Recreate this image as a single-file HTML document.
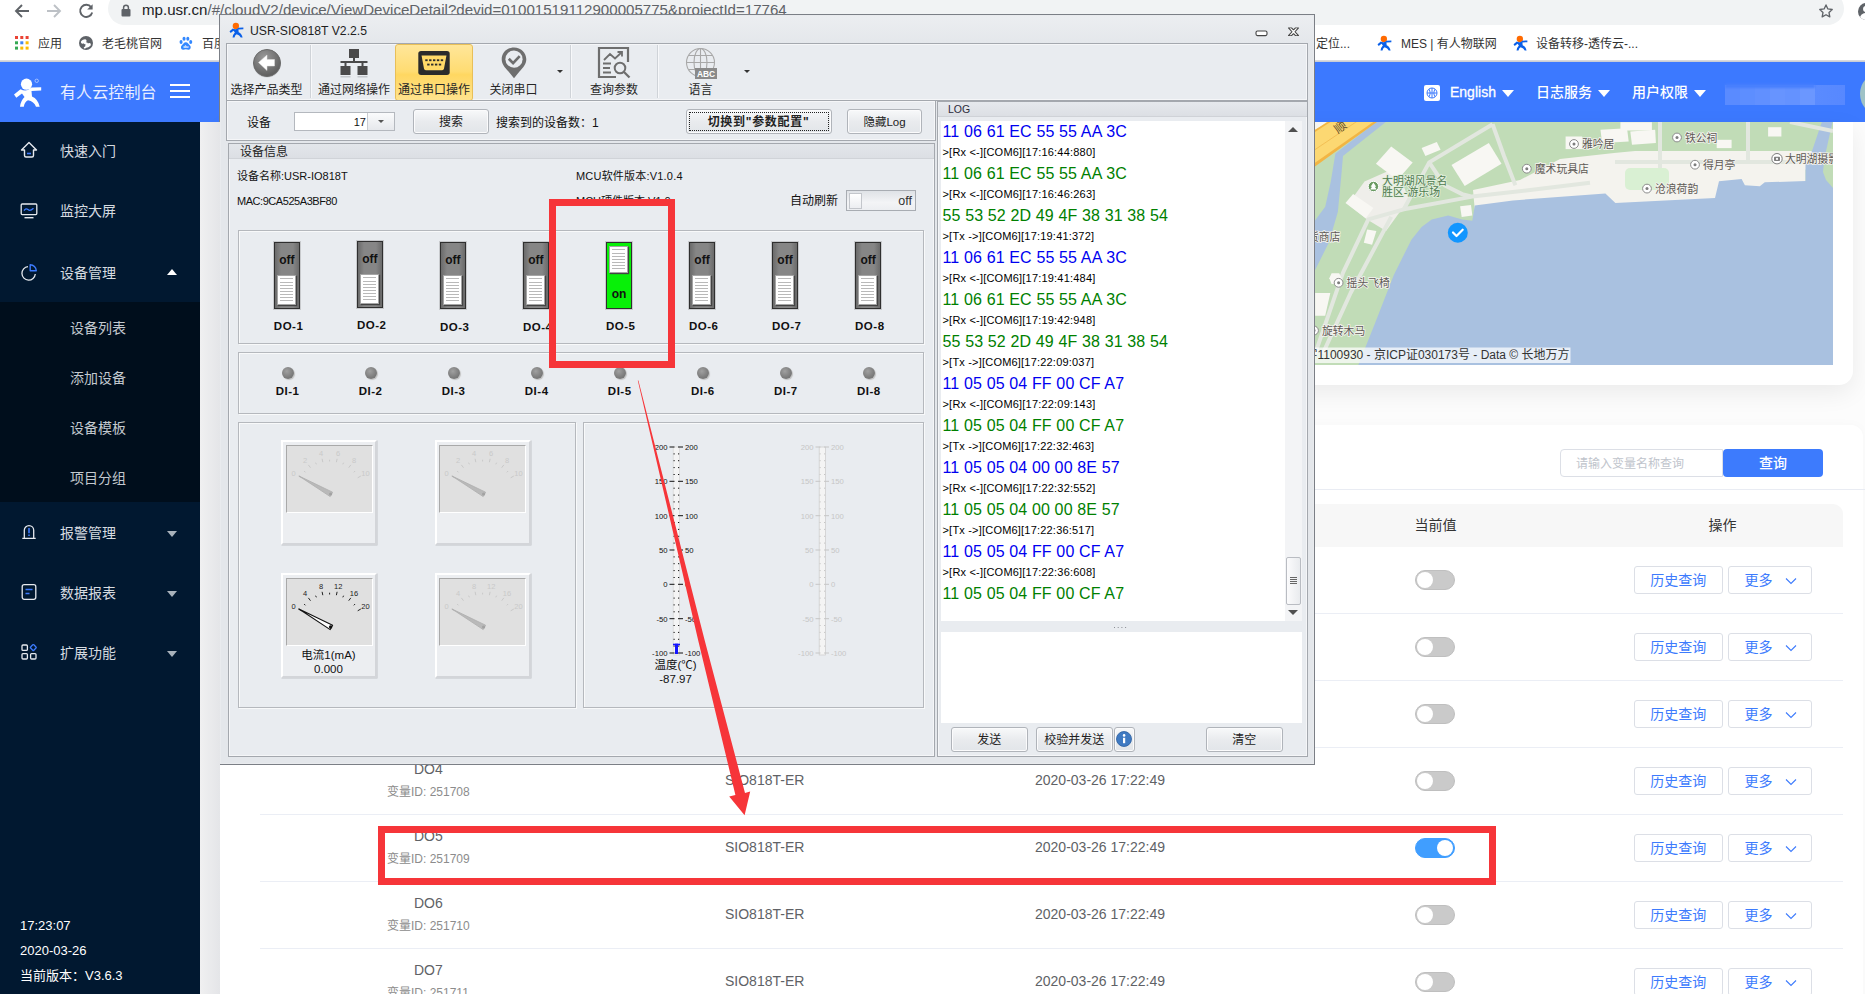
<!DOCTYPE html>
<html lang="zh-CN">
<head>
<meta charset="utf-8">
<title>有人云控制台</title>
<style>
*{box-sizing:border-box;margin:0;padding:0}
html,body{width:1865px;height:994px;overflow:hidden;background:#fff}
body{position:relative;font-family:"Liberation Sans","Noto Sans CJK SC",sans-serif;font-size:14px;color:#333}
.a{position:absolute;white-space:nowrap}
svg{position:absolute;overflow:visible}
/* ---------- browser chrome ---------- */
#chrome{left:0;top:0;width:1865px;height:61px;background:#fff}
#omni{left:108px;top:-8px;width:1736px;height:33px;border-radius:17px;background:#f1f3f4}
#url{left:142px;top:-1px;font-size:15.1px;line-height:22px;color:#202124;letter-spacing:0}
#url span{color:#5f6368}
.bm{top:35px;font-size:12px;line-height:18px;color:#333}
/* ---------- header ---------- */
#hdr{left:0;top:61px;width:1865px;height:60.500px;background:#3c79ff}
#hdr .t{color:#fff;font-size:16px;line-height:24px;top:19px}
.h2{font-size:14px!important;font-weight:500}
.tri{top:28.500px;border:6px solid transparent;border-bottom:0;border-top:7.500px solid #fff}
.dn{left:167px;border:5px solid transparent;border-bottom:0;border-top:6px solid #a9b2bb}
/* ---------- sidebar ---------- */
#side{left:0;top:122px;width:200px;height:872px;background:#011830;z-index:2}
#sub{left:0;top:180px;width:200px;height:200px;background:#000e1c}
.mi{left:60px;font-size:14px;line-height:20px;color:#d6dbe0}
.si{left:70px;font-size:14px;line-height:20px;color:#c3c9cf}
.ft{left:20px;font-size:13px;line-height:18px;color:#fff;margin-top:.5px}
/* ---------- content ---------- */
#main{left:200px;top:122px;width:1665px;height:872px;background:#fcfcfc}
#band{left:200px;top:122px;width:20px;height:872px;background:linear-gradient(90deg,#f0f0f1,#e4e5e8);z-index:1}

/* ---------- desktop app window ---------- */
#win{background:linear-gradient(#eceef1,#e4e7eb 29px,#e4e7eb);border:1px solid #7b7f86;font-family:"Liberation Sans","Noto Sans CJK SC",sans-serif;color:#222}
#win:before{content:"";position:absolute;left:0;top:0;right:0;bottom:0;border:1px solid #e9ebee}
.pnl{background:#e9ecf0;border:1px solid #a4a8ae;box-shadow:inset 1px 1px 0 #f5f6f8,inset -1px -1px 0 #f5f6f8}
.box{border:1px solid #b5b8bd;box-shadow:inset 1px 1px 0 #f8f9fa,1px 1px 0 #f8f9fa}
.tl{text-align:center;font-size:12px;line-height:17px;color:#262626}
.sm{font-size:12px;line-height:17px;color:#111}
.inf{font-size:11px;line-height:17px;color:#111}
.btn{border:1px solid #b0b4ba;border-radius:3px;background:linear-gradient(#f8f9fa,#e9ebee 50%,#e2e5e9);text-align:center;font-size:12px;color:#222;box-shadow:inset 0 0 0 1px #fbfbfc;padding-top:1px}
.sw{width:25.500px;height:67.500px;border:1px solid #2f2f2f;background:linear-gradient(90deg,#6b6b6b,#868686 25%,#868686 75%,#6b6b6b);box-shadow:0 0 0 1px #c8cacd}
.sw.on{background:#08f008;border-color:#2f2f2f}
.swt{left:0;top:10px;width:23.500px;text-align:center;font-size:12px;line-height:14px;font-weight:700;color:#111}
.swh{width:19px;height:30px;border:1px solid #a5a5a5;background:repeating-linear-gradient(#fff 0,#fff 2px,#b9b9b9 2px,#b9b9b9 3px);background-position:0 4px;box-shadow:inset 0 0 0 2px #fff,1px 1px 1px #444}
.dl{width:60px;text-align:center;font-size:11.500px;line-height:14px;font-weight:700;color:#111;letter-spacing:.5px}
.led{width:12px;height:12px;border-radius:50%;background:radial-gradient(circle at 40% 35%,#a0a0a0,#7c7c7c 60%,#6a6a6a);box-shadow:1px 1px 1px #c0c0c0}
.gg{width:96px;height:105px;background:#eceef1;border:2.500px solid #fff;border-right-color:#d3d5d9;border-bottom-color:#d3d5d9;box-shadow:.5px .5px 0 #c2c4c8}
.ggd{left:2.500px;top:2.500px;width:87px;height:68px;background:#e0e0e0;border-left:1px solid #a9a9a9;border-top:1px solid #a9a9a9;border-right:1px solid #fff;border-bottom:1px solid #fff}
.lb{font-size:16px;line-height:21px;letter-spacing:.14px}
.lb.b{color:#0000f0}.lb.g{color:#008000}
.ls{font-size:11px;line-height:21px;color:#000;letter-spacing:.2px}

/* ---------- page content ---------- */
.card{background:#fff;border-radius:0 0 14px 0;box-shadow:0 8px 24px rgba(0,0,0,.07)}
.card2{background:#fff;border-radius:0 12px 0 0;box-shadow:0 0 12px rgba(0,0,0,.025)}
.th{font-size:14px;line-height:20px;color:#333}
.td{font-size:14px;line-height:20px;color:#606266}
.tg{width:40px;height:20px;border-radius:10px;background:#cacaca;border:1px solid #bfbfbf}
.tg i{position:absolute;left:1px;top:1px;width:16px;height:16px;border-radius:50%;background:#fff}
.tg.on{background:#409eff;border-color:#409eff}.tg.on i{left:21px}
.bt{height:28px;border:1px solid #dcdfe6;border-radius:3px;background:#fff;font-size:14px;line-height:26px;color:#3d7bfd;text-align:center}
</style>
</head>
<body>

<svg width="0" height="0" style="left:-10px;top:-10px"><defs>
<g id="usrlogo" transform="translate(.5 .8) scale(.51)"><circle cx="12.500" cy="6.200" r="6.200" fill="#ff6a00"/><path d="M6.500 11.200L0 16.500l2.300 3.300L8 15.600l2.500 3.400Q6.500 23 6 28.800h3.800Q10.500 24 14 22.300q6 1.200 8 6.500h3.700Q24 21 18 18.500L17.500 13l9.700-.5V9.200L17.300 9.500Q12.500 14.500 6.500 11.200z" fill="#0b60e8"/></g>
</defs></svg>

<div id="chrome" class="a">
  <div id="omni" class="a"></div>
  <svg style="left:14px;top:3px" width="16" height="16" viewBox="0 0 16 16"><path d="M15 8H2.5M8 2L2 8l6 6" fill="none" stroke="#5f6368" stroke-width="1.9"/></svg>
  <svg style="left:46px;top:3px" width="16" height="16" viewBox="0 0 16 16"><path d="M1 8h12.5M8 2l6 6-6 6" fill="none" stroke="#bdc1c6" stroke-width="1.9"/></svg>
  <svg style="left:78px;top:3px" width="16" height="16" viewBox="0 0 16 16"><path d="M13.2 4.2A6.1 6.1 0 1 0 14.2 9.5" fill="none" stroke="#5f6368" stroke-width="1.9"/><path d="M14.6 1.2v5.4H9.2z" fill="#5f6368"/></svg>
  <svg style="left:121px;top:4px" width="10" height="13" viewBox="0 0 10 13"><rect x="0.5" y="5" width="9" height="7.5" rx="1" fill="#5f6368"/><path d="M2.6 5.5V3.6a2.4 2.4 0 0 1 4.8 0v1.9" fill="none" stroke="#5f6368" stroke-width="1.5"/></svg>
  <div id="url" class="a">mp.usr.cn<span>/#/cloudV2/device/ViewDeviceDetail?devid=01001519112900005775&amp;projectId=17764</span></div>
  <svg style="left:1818px;top:3px" width="16" height="16" viewBox="0 0 18 18"><path d="M9 2.2l2.1 4.5 4.9.6-3.6 3.4.9 4.9L9 13.2l-4.3 2.4.9-4.9L2 7.3l4.9-.6z" fill="none" stroke="#5f6368" stroke-width="1.5" stroke-linejoin="round"/></svg>
  <div class="a" style="left:1857.500px;top:2.500px;width:17px;height:17px;border-radius:50%;background:#5f6368;overflow:hidden"><div class="a" style="left:5.500px;top:3px;width:6px;height:6px;border-radius:50%;background:#fff"></div><div class="a" style="left:2.500px;top:10.500px;width:12px;height:10px;border-radius:50%;background:#fff"></div></div>
  <!-- bookmarks -->
  <svg style="left:15px;top:36px" width="14" height="14" viewBox="0 0 14 14"><g><rect x="0" y="0" width="3" height="3" fill="#ea4335"/><rect x="5.3" y="0" width="3" height="3" fill="#ea4335"/><rect x="10.6" y="0" width="3" height="3" fill="#ea4335"/><rect x="0" y="5.3" width="3" height="3" fill="#34a853"/><rect x="5.3" y="5.3" width="3" height="3" fill="#4285f4"/><rect x="10.6" y="5.3" width="3" height="3" fill="#fbbc05"/><rect x="0" y="10.6" width="3" height="3" fill="#34a853"/><rect x="5.3" y="10.6" width="3" height="3" fill="#fbbc05"/><rect x="10.6" y="10.6" width="3" height="3" fill="#fbbc05"/></g></svg>
  <div class="a bm" style="left:38px">应用</div>
  <svg style="left:79px;top:36px" width="14" height="14" viewBox="0 0 14 14"><circle cx="7" cy="7" r="7" fill="#5f6368"/><g fill="#fff"><ellipse cx="4.800" cy="5.400" rx="3" ry="1.900" transform="rotate(-25 4.800 5.400)"/><ellipse cx="9" cy="9.300" rx="3.100" ry="1.800" transform="rotate(-25 9 9.300)"/><path d="M5.500 5.500l3.500 1.500-.8 2.500-3.300-1.800z"/><ellipse cx="6.300" cy="11.400" rx="1.600" ry="1" transform="rotate(-20 6.300 11.400)"/></g></svg>
  <div class="a bm" style="left:102px">老毛桃官网</div>
  <svg style="left:178.500px;top:36px" width="13.500" height="14.500" viewBox="0 0 15 16"><g fill="#3388ff"><ellipse cx="2.3" cy="6.600" rx="1.7" ry="2.200"/><ellipse cx="5.600" cy="3" rx="1.700" ry="2.300"/><ellipse cx="9.800" cy="3" rx="1.700" ry="2.300"/><ellipse cx="13" cy="6.600" rx="1.700" ry="2.200"/><path d="M7.600 6.800c2.200 0 3.200 2.200 4.600 3.800 1.500 1.700.8 4.400-1.400 4.600-1.300.1-2-.4-3.200-.4s-1.900.5-3.200.4C2.200 15 1.500 12.300 3 10.600c1.400-1.600 2.400-3.800 4.600-3.800z"/></g><text x="7.600" y="13.400" font-size="4.800" font-weight="700" fill="#fff" text-anchor="middle" font-family="Liberation Sans,sans-serif">du</text></svg>
  <div class="a bm" style="left:202px">百度</div>
  <div class="a bm" style="left:1304px">与定位...</div>
  <svg class="usr" style="left:1377px;top:35px" width="16" height="16" viewBox="0 0 16 16"><use href="#usrlogo"/></svg>
  <div class="a bm" style="left:1401px">MES | 有人物联网</div>
  <svg class="usr" style="left:1513px;top:35px" width="16" height="16" viewBox="0 0 16 16"><use href="#usrlogo"/></svg>
  <div class="a bm" style="left:1536px">设备转移-透传云-...</div>
  <div class="a" style="left:0;top:60px;width:1865px;height:1px;background:#d9dadc"></div>
</div>


<div id="hdr" class="a"><div class="a" style="left:0;top:0;width:1865px;height:1px;background:#c9cdd6"></div>
  <svg style="left:14px;top:17px" width="28" height="30" viewBox="0 0 28 30"><g fill="#fff"><circle cx="12.500" cy="6.200" r="5.600"/><path d="M6.500 11.200L0 16.500l2.300 3.300L8 15.600l2.500 3.400Q6.500 23 6 28.800h3.800Q10.500 24 14 22.300q6 1.200 8 6.500h3.700Q24 21 18 18.500L17.500 13l9.700-.5V9.200L17.300 9.500Q12.500 14.500 6.500 11.200z"/></g><circle cx="22.700" cy="2.800" r="1.700" fill="none" stroke="#dfe8ff" stroke-width=".6"/></svg>
  <div class="a t" style="left:60px;top:19.500px;font-size:16px;letter-spacing:0.1px;color:#e9efff">有人云控制台</div>
  <div class="a" style="left:170px;top:23px;width:20px;height:2px;background:#fff;box-shadow:0 6px 0 #fff,0 12px 0 #fff"></div>
  <div class="a" style="left:1424px;top:24px;width:16px;height:16px;border-radius:2px;background:#fff"></div>
  <svg style="left:1426px;top:26px" width="12" height="12" viewBox="0 0 12 12"><g fill="none" stroke="#3d7bfd" stroke-width="1"><circle cx="6" cy="6" r="5"/><path d="M6 1v10M1 6h10M3 2.200c1.500 2.400 1.500 5.200 0 7.600M9 2.200c-1.500 2.400-1.500 5.200 0 7.600"/></g></svg>
  <div class="a t h2" style="left:1450px;-webkit-text-stroke:.3px #fff">English</div>
  <div class="a tri" style="left:1501.5px"></div>
  <div class="a t h2" style="left:1536px">日志服务</div>
  <div class="a tri" style="left:1598px"></div>
  <div class="a t h2" style="left:1632px">用户权限</div>
  <div class="a tri" style="left:1694px"></div>
  <div class="a" style="left:1725px;top:23.500px;width:120px;height:20.500px;background:linear-gradient(90deg,#5a8bff 0,#5a8bff 12.500%,#5d8eff 12.500%,#5d8eff 25%,#6190ff 25%,#6190ff 37.500%,#6794ff 37.500%,#6794ff 50%,#6492ff 50%,#6492ff 62.500%,#6b97ff 62.500%,#6b97ff 75%,#5a8bff 75%,#5788ff 100%);filter:blur(.6px)"></div><div class="a" style="left:1725px;top:23px;width:90px;height:4px;background:#477ffe;filter:blur(.8px)"></div>
  <div class="a" style="left:1860px;top:10.500px;width:44px;height:44px;border-radius:50%;background:#9fc2c6"></div>
</div>

<div id="main" class="a"></div>
<div id="band" class="a"></div>

<div id="side" class="a">
  <div id="sub" class="a"></div>
  <svg style="left:20px;top:19px" width="18" height="18" viewBox="0 0 18 18"><path d="M9 1.500L1.500 9h3v5.500a1.500 1.500 0 0 0 1.500 1.500h6a1.500 1.500 0 0 0 1.500-1.500V9h3z" fill="none" stroke="#e6e9ee" stroke-width="1.400" stroke-linejoin="round"/><path d="M7 12.500h4" stroke="#3d7bfd" stroke-width="1.600"/></svg>
  <div class="a mi" style="top:19px">快速入门</div>
  <svg style="left:20px;top:80px" width="18" height="18" viewBox="0 0 18 18"><rect x="1.200" y="2" width="15.600" height="10.600" rx="1" fill="none" stroke="#e6e9ee" stroke-width="1.300"/><path d="M4.500 15.700h9" stroke="#e6e9ee" stroke-width="1.400"/><path d="M4 8.600c1.300-2 2.600-2.200 4-1 1.500 1.300 3 1.100 5.500-1.300" fill="none" stroke="#3d7bfd" stroke-width="1.300"/></svg>
  <div class="a mi" style="top:79px">监控大屏</div>
  <svg style="left:20px;top:141px" width="18" height="18" viewBox="0 0 18 18"><path d="M8 3.700A6.700 6.700 0 1 0 15.300 11" fill="none" stroke="#e6e9ee" stroke-width="1.300"/><path d="M10.200 1.700a6.300 6.300 0 0 1 6.100 6.100h-6.100z" fill="none" stroke="#3d7bfd" stroke-width="1.400" stroke-linejoin="round"/></svg>
  <div class="a mi" style="top:141px">设备管理</div>
  <div class="a" style="left:167px;top:147px;border:5px solid transparent;border-top:0;border-bottom:6px solid #fff"></div>
  <div class="a si" style="top:196px">设备列表</div>
  <div class="a si" style="top:246px">添加设备</div>
  <div class="a si" style="top:296px">设备模板</div>
  <div class="a si" style="top:346px">项目分组</div>
  <svg style="left:20px;top:401px" width="18" height="18" viewBox="0 0 18 18"><path d="M4.300 15V7.300a4.700 4.700 0 0 1 9.400 0V15M2.300 15.300h13.400" fill="none" stroke="#e6e9ee" stroke-width="1.300"/><path d="M9 5v5.200M9 11.600v1.500" stroke="#3d7bfd" stroke-width="1.600"/></svg>
  <div class="a mi" style="top:401px">报警管理</div>
  <div class="a dn" style="top:409px"></div>
  <svg style="left:20px;top:461px" width="18" height="18" viewBox="0 0 18 18"><rect x="2.200" y="1.700" width="13.600" height="14.600" rx="2" fill="none" stroke="#e6e9ee" stroke-width="1.300"/><path d="M5.500 6.500h7M5.500 10.500h4" stroke="#3d7bfd" stroke-width="1.400"/></svg>
  <div class="a mi" style="top:461px">数据报表</div>
  <div class="a dn" style="top:469px"></div>
  <svg style="left:20px;top:521px" width="18" height="18" viewBox="0 0 18 18"><g fill="none" stroke="#e6e9ee" stroke-width="1.300"><rect x="2" y="2" width="5.400" height="5.400" rx="1"/><rect x="2" y="10.600" width="5.400" height="5.400" rx="1"/><rect x="10.600" y="10.600" width="5.400" height="5.400" rx="1"/></g><rect x="11" y="2.200" width="4.600" height="4.600" rx=".8" transform="rotate(45 13.300 4.500)" fill="none" stroke="#3d7bfd" stroke-width="1.300"/></svg>
  <div class="a mi" style="top:521px">扩展功能</div>
  <div class="a dn" style="top:529px"></div>
  <div class="a ft" style="top:794px">17:23:07</div>
  <div class="a ft" style="top:819px">2020-03-26</div>
  <div class="a ft" style="top:844px">当前版本：V3.6.3</div>
</div>

<!--PAGE-->
<div class="a card" style="left:220px;top:122px;width:1633px;height:263px"></div>
<svg id="map" style="left:1315px;top:122px" width="518" height="243" viewBox="0 0 518 243"><defs><clipPath id="mc"><rect width="518" height="243"/></clipPath></defs><g clip-path="url(#mc)"><rect width="518" height="243" fill="#c1dcb7"/><polygon fill="#f4f3ee" points="158,68 205,58 245,37 299,31 320,29 500,29 494,42 490.5,48 490.5,66 453,68 430,68 404,66 400,82 300,87 290,80 198,86 160,90"/><polygon fill="#a9c1e0" points="43.2,243.3 60.9,198.9 78.7,153.2 96.4,117.7 106.6,105.1 116.7,97.4 133.2,93.6 147.2,97.4 157.3,98.7 159.8,83.5 197.9,78.4 290.4,71.6 300.4,80.9 400.0,75.9 404.0,59.3 426.6,57.0 429.9,63.3 444.8,64.3 449.8,60.3 490.5,59 490.5,41 497,29 506.8,0 518,0 518,243"/><polygon fill="#a9c1e0" points="-5.0,105.1 -5.0,158.3 5.1,138.0 14.0,120.3 22.9,89.8 26.7,49.3 28.0,34.0 71.1,-0.2 61.4,-0.2 20.4,31.5 15.8,59.4 10.2,84.8"/><polygon fill="#c1dcb7" points="518,0 517.5,0 509.5,36 508,50 511,58 518,66"/><rect x="310" y="46" width="44" height="22" rx="5" fill="#d9f0d3"/><polygon fill="#efeeea" points="49.5,59.4 81.2,45.5 93.9,77.2 71.1,108.9 52.1,97.4 33.0,82.2"/><path d="M88.8,87.3 L157.3,74.6 L213.1,68.3 L275.0,60.7 M88.8,87.3 L114.2,40.4 L177.6,2.3 M177.6,2.3 L189.0,34.0 L200.4,63.2 M114.2,40.4 L129.4,63.2 L147.2,72.1 L157.3,74.6 M88.8,87.3 L53.3,97.4 L28.0,150.7 L0.1,231.9 M76.2,94.9 L35.6,171.0 L7.7,231.9 M345 0V46M433 0V42M300 40L518 40M475 0L518 9" fill="none" stroke="#e2e7df" stroke-width="4" stroke-linejoin="round"/><polygon fill="#f2b544" points="-5.0,-1.5 64.0,-1.5 -5.0,48.0"/><polygon fill="#fcd872" points="-5.0,-1.5 60.4,-1.5 -5.0,44.2"/><polygon fill="#f7f6f2" points="-5.0,-1.5 14.0,-1.5 -5.0,11.7"/><polygon fill="#f2b544" points="-5.0,10.7 15.3,-1.5 17.8,-1.5 -5.0,13.2"/><path d="M-5.0,31.0 L43.2,-1.5" stroke="#f0b94c" stroke-width=".8"/><text x="23" y="12" font-size="12" fill="#5a4a2a" transform="rotate(-37 23 12)" font-family="Liberation Sans,Noto Sans CJK SC,sans-serif">顺</text><polygon fill="#f8f7f3" points="60.9,41.7 76.2,24.4 97.7,40.4 82.5,58.1"/><polygon fill="#f8f7f3" points="106.6,25.9 121.8,20.1 125.6,27.7 110.4,34.0"/><polygon fill="#f8f7f3" points="136.5,42.9 173.8,20.9 186.5,41.7 149.7,64.0"/><polygon fill="#f8f7f3" points="30.5,81.0 38.1,72.1 58.4,86.0 50.8,96.2"/><polygon fill="#f8f7f3" points="52.1,107.6 61.4,108.9 57.1,122.8 48.8,120.8"/><polygon fill="#f8f7f3" points="145.1,84.3 156.0,83.0 157.3,93.6 146.7,94.9"/><polygon fill="#f8f7f3" points="0.1,171.0 15.3,171.0 10.2,193.8 0.1,193.8"/><polygon fill="#f8f7f3" points="16.6,151.2 24.2,151.2 26.7,156.3 24.2,162.1 16.6,162.1 14.3,156.3"/><polygon fill="#f8f7f3" points="285.5,7.8 312.0,6.2 313.7,19.5 287.1,21.1"/><polygon fill="#f8f7f3" points="315.3,9.5 340.2,7.8 340.9,21.1 317.0,22.8"/><polygon fill="#f8f7f3" points="305.4,0.2 336.9,0.2 336.9,8.5 305.4,8.5"/><polygon fill="#f8f7f3" points="453.1,5.2 466.4,5.2 466.4,14.5 453.1,14.5"/><polygon fill="#f8f7f3" points="401.7,17.8 416.6,17.8 416.6,26.1 401.7,26.1"/><polygon fill="#f8f7f3" points="250.6,14.5 267.2,14.5 267.2,27.1 250.6,27.1"/><style>.pt{font-size:10.8px;fill:#5e5a55;font-family:"Liberation Sans","Noto Sans CJK SC",sans-serif;paint-order:stroke;stroke:#f4f3ef;stroke-width:1.6px}.gt{font-size:10.9px;fill:#4e7a4e;font-family:"Liberation Sans","Noto Sans CJK SC",sans-serif;paint-order:stroke;stroke:#e4f0de;stroke-width:1.6px}</style><circle cx="259" cy="22" r="4.4" fill="#fff" stroke="#8b8b8b" stroke-width="1"/><circle cx="259" cy="22" r="1.5" fill="#7d7d7d"/><text x="267" y="26" class="pt">雅吟居</text><circle cx="362" cy="15.5" r="4.4" fill="#fff" stroke="#8b8b8b" stroke-width="1"/><circle cx="362" cy="15.5" r="1.5" fill="#7d7d7d"/><text x="370" y="19.5" class="pt">铁公祠</text><circle cx="211.8" cy="46.7" r="4.4" fill="#fff" stroke="#8b8b8b" stroke-width="1"/><circle cx="211.8" cy="46.7" r="1.5" fill="#7d7d7d"/><text x="219.8" y="50.7" class="pt">魔术玩具店</text><circle cx="380" cy="42.7" r="4.4" fill="#fff" stroke="#8b8b8b" stroke-width="1"/><circle cx="380" cy="42.7" r="1.5" fill="#7d7d7d"/><text x="388" y="46.7" class="pt">得月亭</text><circle cx="332" cy="66.6" r="4.4" fill="#fff" stroke="#8b8b8b" stroke-width="1"/><circle cx="332" cy="66.6" r="1.5" fill="#7d7d7d"/><text x="340" y="70.6" class="pt">沧浪荷韵</text><circle cx="462" cy="36.7" r="5.2" fill="#fff" stroke="#7d7d7d" stroke-width="1"/><rect x="459" y="34.7" width="6" height="4.4" rx=".8" fill="#7d7d7d"/><circle cx="462" cy="36.900000000000006" r="1.1" fill="#fff"/><text x="470" y="40.7" class="pt">大明湖摄影</text><circle cx="23.6" cy="160.8" r="4.4" fill="#fff" stroke="#8b8b8b" stroke-width="1"/><circle cx="23.6" cy="160.8" r="1.5" fill="#7d7d7d"/><text x="31.6" y="164.8" class="pt">摇头飞椅</text><circle cx="-1" cy="208.5" r="4.4" fill="#fff" stroke="#8b8b8b" stroke-width="1"/><circle cx="-1" cy="208.5" r="1.5" fill="#7d7d7d"/><text x="7" y="212.5" class="pt">旋转木马</text><text x="-7" y="118.5" class="pt">货商店</text><circle cx="58.4" cy="64.5" r="5.2" fill="#6a9a62" stroke="#fff" stroke-width="1"/><path d="M58.4 60.6l2.8 4.200h-1.500l2 2.800h-6.600l2-2.800h-1.500z" fill="#fff"/><text x="67" y="62.5" class="gt">大明湖风景名</text><text x="67" y="73.500" class="gt">胜区-游乐场</text><circle cx="142.8" cy="110.800" r="10" fill="#1296ff"/><path d="M138 110.500l3.500 3.500 6.200-6.300" fill="none" stroke="#fff" stroke-width="2.200" stroke-linecap="round" stroke-linejoin="round"/><rect x="-10" y="225.500" width="265.500" height="15.500" fill="#fff" fill-opacity=".72"/><text x="254.5" y="237" text-anchor="end" font-size="12" fill="#333" font-family="Liberation Sans,Noto Sans CJK SC,sans-serif">GS(2019)5218号 - 甲测资字1100930 - 京ICP证030173号 - Data © 长地万方</text></g></svg>
<div class="a card2" style="left:220px;top:425px;width:1643px;height:600px"></div>
<div class="a" style="left:1560px;top:449px;width:163px;height:28px;border:1px solid #dcdfe6;border-radius:4px 0 0 4px;background:#fff"></div>
<div class="a" style="left:1576px;top:455px;font-size:12px;line-height:18px;color:#c0c4cc">请输入变量名称查询</div>
<div class="a" style="left:1723px;top:449px;width:100px;height:28px;border-radius:4px;background:#3d7bfd;color:#fff;font-size:14px;font-weight:500;line-height:28px;text-align:center">查询</div>
<div class="a" style="left:220px;top:488.500px;width:1645px;height:1px;background:#e9ecf3"></div>
<div class="a" style="left:240px;top:504px;width:1603px;height:43px;background:#f7f7f7;border-radius:10px 10px 0 0"></div>
<div class="a th" style="left:1414.500px;top:515px">当前值</div>
<div class="a th" style="left:1708.500px;top:515px">操作</div>
<div class="a" style="left:260px;top:613px;width:1583px;height:1px;background:#ebeef5"></div>
<div class="a tg" style="left:1415px;top:570px"><i></i></div>
<div class="a bt" style="left:1633.5px;top:566px;width:89.5px">历史查询</div>
<div class="a bt" style="left:1727.5px;top:566px;width:84.5px;text-align:left;padding-left:16px">更多<svg style="left:56px;top:10px" width="12" height="8" viewBox="0 0 12 8"><path d="M1 1.500l5 5 5-5" fill="none" stroke="#3d7bfd" stroke-width="1.100"/></svg></div>
<div class="a" style="left:260px;top:680px;width:1583px;height:1px;background:#ebeef5"></div>
<div class="a tg" style="left:1415px;top:637px"><i></i></div>
<div class="a bt" style="left:1633.5px;top:633px;width:89.5px">历史查询</div>
<div class="a bt" style="left:1727.5px;top:633px;width:84.5px;text-align:left;padding-left:16px">更多<svg style="left:56px;top:10px" width="12" height="8" viewBox="0 0 12 8"><path d="M1 1.500l5 5 5-5" fill="none" stroke="#3d7bfd" stroke-width="1.100"/></svg></div>
<div class="a" style="left:260px;top:747px;width:1583px;height:1px;background:#ebeef5"></div>
<div class="a tg" style="left:1415px;top:704px"><i></i></div>
<div class="a bt" style="left:1633.5px;top:700px;width:89.5px">历史查询</div>
<div class="a bt" style="left:1727.5px;top:700px;width:84.5px;text-align:left;padding-left:16px">更多<svg style="left:56px;top:10px" width="12" height="8" viewBox="0 0 12 8"><path d="M1 1.500l5 5 5-5" fill="none" stroke="#3d7bfd" stroke-width="1.100"/></svg></div>
<div class="a" style="left:260px;top:814px;width:1583px;height:1px;background:#ebeef5"></div>
<div class="a tg" style="left:1415px;top:771px"><i></i></div>
<div class="a bt" style="left:1633.5px;top:767px;width:89.5px">历史查询</div>
<div class="a bt" style="left:1727.5px;top:767px;width:84.5px;text-align:left;padding-left:16px">更多<svg style="left:56px;top:10px" width="12" height="8" viewBox="0 0 12 8"><path d="M1 1.500l5 5 5-5" fill="none" stroke="#3d7bfd" stroke-width="1.100"/></svg></div>
<div class="a" style="left:414px;top:759px;font-size:14px;line-height:20px;color:#606266">DO4</div>
<div class="a" style="left:387px;top:782.5px;font-size:12px;line-height:18px;color:#8c8c8c">变量ID: 251708</div>
<div class="a td" style="left:725px;top:769.5px">SIO818T-ER</div>
<div class="a td" style="left:1035px;top:769.5px">2020-03-26 17:22:49</div>
<div class="a" style="left:260px;top:881px;width:1583px;height:1px;background:#ebeef5"></div>
<div class="a tg on" style="left:1415px;top:838px"><i></i></div>
<div class="a bt" style="left:1633.5px;top:834px;width:89.5px">历史查询</div>
<div class="a bt" style="left:1727.5px;top:834px;width:84.5px;text-align:left;padding-left:16px">更多<svg style="left:56px;top:10px" width="12" height="8" viewBox="0 0 12 8"><path d="M1 1.500l5 5 5-5" fill="none" stroke="#3d7bfd" stroke-width="1.100"/></svg></div>
<div class="a" style="left:414px;top:826px;font-size:14px;line-height:20px;color:#606266">DO5</div>
<div class="a" style="left:387px;top:849.5px;font-size:12px;line-height:18px;color:#8c8c8c">变量ID: 251709</div>
<div class="a td" style="left:725px;top:836.5px">SIO818T-ER</div>
<div class="a td" style="left:1035px;top:836.5px">2020-03-26 17:22:49</div>
<div class="a" style="left:260px;top:948px;width:1583px;height:1px;background:#ebeef5"></div>
<div class="a tg" style="left:1415px;top:905px"><i></i></div>
<div class="a bt" style="left:1633.5px;top:901px;width:89.5px">历史查询</div>
<div class="a bt" style="left:1727.5px;top:901px;width:84.5px;text-align:left;padding-left:16px">更多<svg style="left:56px;top:10px" width="12" height="8" viewBox="0 0 12 8"><path d="M1 1.500l5 5 5-5" fill="none" stroke="#3d7bfd" stroke-width="1.100"/></svg></div>
<div class="a" style="left:414px;top:893px;font-size:14px;line-height:20px;color:#606266">DO6</div>
<div class="a" style="left:387px;top:916.5px;font-size:12px;line-height:18px;color:#8c8c8c">变量ID: 251710</div>
<div class="a td" style="left:725px;top:903.5px">SIO818T-ER</div>
<div class="a td" style="left:1035px;top:903.5px">2020-03-26 17:22:49</div>
<div class="a tg" style="left:1415px;top:972px"><i></i></div>
<div class="a bt" style="left:1633.5px;top:968px;width:89.5px">历史查询</div>
<div class="a bt" style="left:1727.5px;top:968px;width:84.5px;text-align:left;padding-left:16px">更多<svg style="left:56px;top:10px" width="12" height="8" viewBox="0 0 12 8"><path d="M1 1.500l5 5 5-5" fill="none" stroke="#3d7bfd" stroke-width="1.100"/></svg></div>
<div class="a" style="left:414px;top:960px;font-size:14px;line-height:20px;color:#606266">DO7</div>
<div class="a" style="left:387px;top:983.5px;font-size:12px;line-height:18px;color:#8c8c8c">变量ID: 251711</div>
<div class="a td" style="left:725px;top:970.5px">SIO818T-ER</div>
<div class="a td" style="left:1035px;top:970.5px">2020-03-26 17:22:49</div>
<!--/PAGE-->
<!--WIN-->
<div id="win" class="a" style="left:219px;top:14px;width:1096px;height:751px">
<svg style="left:9px;top:7px" width="16" height="16" viewBox="0 0 16 16"><use href="#usrlogo"/></svg>
<div class="a" style="left:30px;top:7px;font-size:12.2px;line-height:18px;color:#1e1e1e">USR-SIO818T V2.2.5</div>
<svg style="left:1035px;top:15px" width="13" height="7" viewBox="0 0 13 7"><rect x="1" y="1" width="11" height="4.600" rx="1.500" fill="#fff" stroke="#444" stroke-width="1.100"/></svg>
<svg style="left:1067px;top:11.5px" width="13" height="9.5" viewBox="0 0 13 11" preserveAspectRatio="none"><path d="M1.500 1h3l2 2.300 2-2.300h3L8 5.500l3.500 4.500h-3l-2-2.300-2 2.300h-3L5 5.500z" fill="#fff" stroke="#444" stroke-width="1.100" stroke-linejoin="round"/></svg>
<div class="a pnl" style="left:6px;top:28px;width:1082px;height:58px"></div>
<div class="a" style="left:175px;top:29px;width:78px;height:56.5px;border:1px solid #e8bf58;border-radius:3px;background:linear-gradient(#ffe69a,#ffdc72 48%,#ffd761 54%,#ffe38e)"></div>
<div class="a" style="left:90px;top:30px;width:1px;height:53px;background:#cfd3d8;box-shadow:1px 0 0 #f7f8fa"></div>
<div class="a" style="left:350px;top:30px;width:1px;height:53px;background:#cfd3d8;box-shadow:1px 0 0 #f7f8fa"></div>
<div class="a" style="left:437px;top:30px;width:1px;height:53px;background:#cfd3d8;box-shadow:1px 0 0 #f7f8fa"></div>
<div class="a tl" style="left:-3.5px;top:67px;width:100px">选择产品类型</div>
<div class="a tl" style="left:84px;top:67px;width:100px">通过网络操作</div>
<div class="a tl" style="left:164px;top:67px;width:100px">通过串口操作</div>
<div class="a tl" style="left:243.5px;top:67px;width:100px">关闭串口</div>
<div class="a tl" style="left:344px;top:67px;width:100px">查询参数</div>
<div class="a tl" style="left:430.6px;top:67px;width:100px">语言</div>
<svg style="left:32px;top:33px" width="30" height="30" viewBox="0 0 30 30"><defs><radialGradient id="gb" cx=".4" cy=".3" r=".8"><stop offset="0" stop-color="#9a9a9a"/><stop offset="1" stop-color="#555"/></radialGradient></defs><circle cx="15" cy="15.500" r="14" fill="#c9ccd0"/><circle cx="15" cy="15" r="13.500" fill="url(#gb)" stroke="#6b6b6b" stroke-width="1"/><path d="M6.500 14.500l8.500-7.500v4.500h7.500v6.500H15v4.500z" fill="#fff" stroke="#e0e0e0" stroke-width=".5"/></svg>
<svg style="left:119px;top:33px" width="30" height="30" viewBox="0 0 30 30"><g fill="#4a4a4a"><rect x="10" y="1" width="10" height="9"/><rect x="1.500" y="18" width="10" height="9"/><rect x="18.500" y="18" width="10" height="9"/><rect x="14" y="10" width="2" height="4"/><rect x="1.500" y="13" width="27" height="2"/><rect x="5.500" y="14" width="2" height="4"/><rect x="22.500" y="14" width="2" height="4"/></g><rect x="1.500" y="28" width="10" height="1.500" fill="#c4c7cb"/><rect x="18.500" y="28" width="10" height="1.500" fill="#c4c7cb"/></svg>
<svg style="left:198px;top:36px" width="32" height="24" viewBox="0 0 34 26"><rect x="0" y="0" width="34" height="26" rx="3" fill="#2b2b2b"/><path d="M3.500 5h27l-2.700 14.200a2 2 0 0 1-2 1.600H8.200a2 2 0 0 1-2-1.600z" fill="#ffd968"/><g fill="#2b2b2b"><rect x="7.500" y="9" width="2.600" height="2"/><rect x="11.700" y="9" width="2.600" height="2"/><rect x="15.900" y="9" width="2.600" height="2"/><rect x="20.100" y="9" width="2.600" height="2"/><rect x="24.300" y="9" width="2.600" height="2"/><rect x="9.600" y="13.700" width="2.600" height="2"/><rect x="13.800" y="13.700" width="2.600" height="2"/><rect x="18" y="13.700" width="2.600" height="2"/><rect x="22.200" y="13.700" width="2.600" height="2"/></g></svg>
<svg style="left:280px;top:31px" width="28" height="34" viewBox="0 0 28 34"><path d="M14 1.500C7 1.500 1.700 6.800 1.700 13.300c0 4.800 3.300 8.400 6.600 12l5.700 7 5.700-7c3.300-3.600 6.600-7.200 6.600-12C26.300 6.800 21 1.500 14 1.500z" fill="#6e6e6e"/><circle cx="14" cy="13.200" r="8.600" fill="#e9ecf0"/><path d="M8.800 12.800l4.300 4.300 6.600-7" fill="none" stroke="#6e6e6e" stroke-width="2.700"/></svg>
<svg style="left:377px;top:31px" width="34" height="33" viewBox="0 0 34 33"><g fill="none" stroke="#6e6e6e"><path d="M19 31H2V2h29v14" stroke-width="2.200"/><path d="M7 14l6-6 5 4.500 7-6.500M20.500 6h4.500v4.500" stroke-width="1.800"/><path d="M6 17.500h8M6 22h7M6 26.500h8" stroke-width="2"/><circle cx="23" cy="22" r="5.300" stroke-width="2"/><path d="M27 26l5.500 5.500" stroke-width="2.300"/></g></svg>
<svg style="left:465px;top:32px" width="33" height="33" viewBox="0 0 33 33"><g fill="none" stroke="#a8a8a8" stroke-width="1.100"><circle cx="15.500" cy="15.500" r="14"/><ellipse cx="15.500" cy="15.500" rx="6.500" ry="14"/><path d="M15.500 1.500v28M1.500 15.500h28M3.500 8.500h24M3.500 22.500h24"/></g><rect x="10" y="21" width="22" height="11" fill="#8a8a8a"/><text x="21" y="29.700" font-size="8.400" font-weight="700" fill="#fff" text-anchor="middle" font-family="Liberation Sans,sans-serif">ABC</text></svg>
<div class="a" style="left:337px;top:55px;border:3px solid transparent;border-bottom:0;border-top:3.500px solid #333"></div>
<div class="a" style="left:523.5px;top:55px;border:3px solid transparent;border-bottom:0;border-top:3.500px solid #333"></div>
<div class="a pnl" style="left:6px;top:85px;width:710px;height:40.5px"></div>
<div class="a sm" style="left:27px;top:100px">设备</div>
<div class="a" style="left:74px;top:97px;width:101px;height:19px;background:#fff;border:1px solid #b4b8be"></div>
<div class="a" style="left:147px;top:98px;width:27px;height:17px;background:linear-gradient(#fafbfc,#e6e8ec);border-left:1px solid #c9ccd1"></div>
<div class="a" style="left:157.5px;top:105px;border:3px solid transparent;border-bottom:0;border-top:3.500px solid #555"></div>
<div class="a" style="left:110px;top:98.5px;width:36px;text-align:right;font-size:11px;line-height:17px;color:#111">17</div>
<div class="a btn" style="left:193px;top:93.5px;width:76px;height:25px;line-height:23px;">搜索</div>
<div class="a sm" style="left:276px;top:100px">搜索到的设备数：1</div>
<div class="a btn" style="left:465.5px;top:93.5px;width:146px;height:25px;line-height:23px;font-weight:700;color:#222;letter-spacing:.7px">切换到"参数配置"</div>
<div class="a" style="left:468.5px;top:96.5px;width:140px;height:19px;border:1px dotted #222"></div>
<div class="a btn" style="left:627px;top:93.5px;width:75px;height:25px;line-height:23px;font-size:11.500px">隐藏Log</div>
<div class="a pnl" style="left:8px;top:127.5px;width:707px;height:614px"></div>
<div class="a" style="left:9px;top:128.5px;width:705px;height:15px;background:linear-gradient(#e3e6ea,#dcdfe4);border-bottom:1px solid #d0d3d8"></div>
<div class="a sm" style="left:20px;top:128.5px;line-height:17px;color:#222">设备信息</div>
<div class="a inf" style="left:17px;top:153px">设备名称:USR-IO818T</div>
<div class="a inf" style="left:17px;top:178px;letter-spacing:-.45px">MAC:9CA525A3BF80</div>
<div class="a inf" style="left:356px;top:153px;letter-spacing:.2px">MCU软件版本:V1.0.4</div>
<div class="a inf" style="left:356px;top:178px">MCU硬件版本:V1.0</div>
<div class="a sm" style="left:570px;top:178px;font-size:12px">自动刷新</div>
<div class="a" style="left:626px;top:175px;width:70px;height:21px;border:1px solid #a8acb2;background:linear-gradient(#dfe2e6,#f3f4f6 60%,#eceef1)"></div>
<div class="a" style="left:629px;top:177.5px;width:13px;height:16px;border:1px solid #c3c6cb;background:linear-gradient(#fff,#eceef1)"></div>
<div class="a" style="left:668px;top:177.5px;width:24px;text-align:right;font-size:12.500px;line-height:16px;color:#333">off</div>
<div class="a box" style="left:17.5px;top:215px;width:686px;height:114px"></div>
<div class="a box" style="left:17.5px;top:336.5px;width:686px;height:62px"></div>
<div class="a sw" style="left:54.1px;top:226.5px"><div class="a swt">off</div><div class="a swh" style="left:2.200px;top:32.500px"></div></div>
<div class="a dl" style="left:38.6px;top:304px">DO-1</div>
<div class="a led" style="left:61.6px;top:351.5px"></div>
<div class="a dl" style="left:37.6px;top:369px">DI-1</div>
<div class="a sw" style="left:137.13px;top:225.5px"><div class="a swt">off</div><div class="a swh" style="left:2.200px;top:32.500px"></div></div>
<div class="a dl" style="left:121.63px;top:303px">DO-2</div>
<div class="a led" style="left:144.63px;top:351.5px"></div>
<div class="a dl" style="left:120.63px;top:369px">DI-2</div>
<div class="a sw" style="left:220.16px;top:226.5px"><div class="a swt">off</div><div class="a swh" style="left:2.200px;top:32.500px"></div></div>
<div class="a dl" style="left:204.66px;top:305px">DO-3</div>
<div class="a led" style="left:227.66px;top:351.5px"></div>
<div class="a dl" style="left:203.66px;top:369px">DI-3</div>
<div class="a sw" style="left:303.19px;top:226.5px"><div class="a swt">off</div><div class="a swh" style="left:2.200px;top:32.500px"></div></div>
<div class="a dl" style="left:287.69px;top:305px">DO-4</div>
<div class="a led" style="left:310.69px;top:351.5px"></div>
<div class="a dl" style="left:286.69px;top:369px">DI-4</div>
<div class="a sw on" style="left:386.22px;top:226.5px"><div class="a swh" style="left:2.200px;top:3px;height:27.500px"></div><div class="a swt" style="top:44px">on</div></div>
<div class="a dl" style="left:370.72px;top:304px">DO-5</div>
<div class="a led" style="left:393.72px;top:351.5px"></div>
<div class="a dl" style="left:369.72px;top:369px">DI-5</div>
<div class="a sw" style="left:469.25px;top:226.5px"><div class="a swt">off</div><div class="a swh" style="left:2.200px;top:32.500px"></div></div>
<div class="a dl" style="left:453.75px;top:304px">DO-6</div>
<div class="a led" style="left:476.75px;top:351.5px"></div>
<div class="a dl" style="left:452.75px;top:369px">DI-6</div>
<div class="a sw" style="left:552.28px;top:226.5px"><div class="a swt">off</div><div class="a swh" style="left:2.200px;top:32.500px"></div></div>
<div class="a dl" style="left:536.78px;top:304px">DO-7</div>
<div class="a led" style="left:559.78px;top:351.5px"></div>
<div class="a dl" style="left:535.78px;top:369px">DI-7</div>
<div class="a sw" style="left:635.31px;top:226.5px"><div class="a swt">off</div><div class="a swh" style="left:2.200px;top:32.500px"></div></div>
<div class="a dl" style="left:619.81px;top:304px">DO-8</div>
<div class="a led" style="left:642.81px;top:351.5px"></div>
<div class="a dl" style="left:618.81px;top:369px">DI-8</div>
<div class="a box" style="left:17.5px;top:406.5px;width:338px;height:286px"></div>
<div class="a box" style="left:363px;top:406.5px;width:341px;height:286px"></div>
<div class="a gg" style="left:61px;top:425px"><div class="a ggd"><svg style="left:0;top:0" width="86" height="67" viewBox="0 0 86 67"><path d="M14.5 31.8L11.4 30.0" stroke="#c9c9c9" stroke-width="1"/><text x="6.7" y="30.0" font-size="7.5" fill="#c9c9c9" text-anchor="middle" font-family="Liberation Sans,sans-serif">0</text><path d="M18.4 26.3L17.1 25.0" stroke="#c9c9c9" stroke-width="1"/><path d="M23.5 21.7L21.4 18.9" stroke="#c9c9c9" stroke-width="1"/><text x="18.2" y="17.1" font-size="7.5" fill="#c9c9c9" text-anchor="middle" font-family="Liberation Sans,sans-serif">2</text><path d="M29.4 18.3L28.6 16.7" stroke="#c9c9c9" stroke-width="1"/><path d="M35.8 16.2L35.1 12.8" stroke="#c9c9c9" stroke-width="1"/><text x="34.0" y="10.1" font-size="7.5" fill="#c9c9c9" text-anchor="middle" font-family="Liberation Sans,sans-serif">4</text><path d="M42.6 15.5L42.6 13.7" stroke="#c9c9c9" stroke-width="1"/><path d="M49.4 16.2L50.1 12.8" stroke="#c9c9c9" stroke-width="1"/><text x="51.2" y="10.1" font-size="7.5" fill="#c9c9c9" text-anchor="middle" font-family="Liberation Sans,sans-serif">6</text><path d="M55.8 18.3L56.6 16.7" stroke="#c9c9c9" stroke-width="1"/><path d="M61.7 21.7L63.8 18.9" stroke="#c9c9c9" stroke-width="1"/><text x="67.0" y="17.1" font-size="7.5" fill="#c9c9c9" text-anchor="middle" font-family="Liberation Sans,sans-serif">8</text><path d="M66.8 26.3L68.1 25.0" stroke="#c9c9c9" stroke-width="1"/><path d="M70.7 31.8L73.8 30.0" stroke="#c9c9c9" stroke-width="1"/><text x="78.5" y="30.0" font-size="7.5" fill="#c9c9c9" text-anchor="middle" font-family="Liberation Sans,sans-serif">10</text><path d="M12 30L45.6 46.2 43.2 50.6z" fill="#b9b9b9" stroke="#adadad" stroke-width=".8" stroke-linejoin="round"/><circle cx="43.6" cy="48" r="1.6" fill="#a2a2a2"/></svg></div></div>
<div class="a gg" style="left:214.8px;top:425px"><div class="a ggd"><svg style="left:0;top:0" width="86" height="67" viewBox="0 0 86 67"><path d="M14.5 31.8L11.4 30.0" stroke="#c9c9c9" stroke-width="1"/><text x="6.7" y="30.0" font-size="7.5" fill="#c9c9c9" text-anchor="middle" font-family="Liberation Sans,sans-serif">0</text><path d="M18.4 26.3L17.1 25.0" stroke="#c9c9c9" stroke-width="1"/><path d="M23.5 21.7L21.4 18.9" stroke="#c9c9c9" stroke-width="1"/><text x="18.2" y="17.1" font-size="7.5" fill="#c9c9c9" text-anchor="middle" font-family="Liberation Sans,sans-serif">2</text><path d="M29.4 18.3L28.6 16.7" stroke="#c9c9c9" stroke-width="1"/><path d="M35.8 16.2L35.1 12.8" stroke="#c9c9c9" stroke-width="1"/><text x="34.0" y="10.1" font-size="7.5" fill="#c9c9c9" text-anchor="middle" font-family="Liberation Sans,sans-serif">4</text><path d="M42.6 15.5L42.6 13.7" stroke="#c9c9c9" stroke-width="1"/><path d="M49.4 16.2L50.1 12.8" stroke="#c9c9c9" stroke-width="1"/><text x="51.2" y="10.1" font-size="7.5" fill="#c9c9c9" text-anchor="middle" font-family="Liberation Sans,sans-serif">6</text><path d="M55.8 18.3L56.6 16.7" stroke="#c9c9c9" stroke-width="1"/><path d="M61.7 21.7L63.8 18.9" stroke="#c9c9c9" stroke-width="1"/><text x="67.0" y="17.1" font-size="7.5" fill="#c9c9c9" text-anchor="middle" font-family="Liberation Sans,sans-serif">8</text><path d="M66.8 26.3L68.1 25.0" stroke="#c9c9c9" stroke-width="1"/><path d="M70.7 31.8L73.8 30.0" stroke="#c9c9c9" stroke-width="1"/><text x="78.5" y="30.0" font-size="7.5" fill="#c9c9c9" text-anchor="middle" font-family="Liberation Sans,sans-serif">10</text><path d="M12 30L45.6 46.2 43.2 50.6z" fill="#b9b9b9" stroke="#adadad" stroke-width=".8" stroke-linejoin="round"/><circle cx="43.6" cy="48" r="1.6" fill="#a2a2a2"/></svg></div></div>
<div class="a gg" style="left:61px;top:558px"><div class="a ggd"><svg style="left:0;top:0" width="86" height="67" viewBox="0 0 86 67"><path d="M14.5 31.8L11.4 30.0" stroke="#222" stroke-width="1"/><text x="6.7" y="30.0" font-size="7.5" fill="#222" text-anchor="middle" font-family="Liberation Sans,sans-serif">0</text><path d="M18.4 26.3L17.1 25.0" stroke="#222" stroke-width="1"/><path d="M23.5 21.7L21.4 18.9" stroke="#222" stroke-width="1"/><text x="18.2" y="17.1" font-size="7.5" fill="#222" text-anchor="middle" font-family="Liberation Sans,sans-serif">4</text><path d="M29.4 18.3L28.6 16.7" stroke="#222" stroke-width="1"/><path d="M35.8 16.2L35.1 12.8" stroke="#222" stroke-width="1"/><text x="34.0" y="10.1" font-size="7.5" fill="#222" text-anchor="middle" font-family="Liberation Sans,sans-serif">8</text><path d="M42.6 15.5L42.6 13.7" stroke="#222" stroke-width="1"/><path d="M49.4 16.2L50.1 12.8" stroke="#222" stroke-width="1"/><text x="51.2" y="10.1" font-size="7.5" fill="#222" text-anchor="middle" font-family="Liberation Sans,sans-serif">12</text><path d="M55.8 18.3L56.6 16.7" stroke="#222" stroke-width="1"/><path d="M61.7 21.7L63.8 18.9" stroke="#222" stroke-width="1"/><text x="67.0" y="17.1" font-size="7.5" fill="#222" text-anchor="middle" font-family="Liberation Sans,sans-serif">16</text><path d="M66.8 26.3L68.1 25.0" stroke="#222" stroke-width="1"/><path d="M70.7 31.8L73.8 30.0" stroke="#222" stroke-width="1"/><text x="78.5" y="30.0" font-size="7.5" fill="#222" text-anchor="middle" font-family="Liberation Sans,sans-serif">20</text><path d="M12 30L45.6 46.2 43.2 50.6z" fill="#fff" stroke="#111" stroke-width="1.1" stroke-linejoin="round"/><circle cx="43.6" cy="48" r="1.7" fill="#111"/></svg></div><div class="a" style="left:0;top:72.500px;width:91px;text-align:center;font-size:11.5px;line-height:14px;color:#111">电流1(mA)<br>0.000</div></div>
<div class="a gg" style="left:214.8px;top:558px"><div class="a ggd"><svg style="left:0;top:0" width="86" height="67" viewBox="0 0 86 67"><path d="M14.5 31.8L11.4 30.0" stroke="#c9c9c9" stroke-width="1"/><text x="6.7" y="30.0" font-size="7.5" fill="#c9c9c9" text-anchor="middle" font-family="Liberation Sans,sans-serif">0</text><path d="M18.4 26.3L17.1 25.0" stroke="#c9c9c9" stroke-width="1"/><path d="M23.5 21.7L21.4 18.9" stroke="#c9c9c9" stroke-width="1"/><text x="18.2" y="17.1" font-size="7.5" fill="#c9c9c9" text-anchor="middle" font-family="Liberation Sans,sans-serif">4</text><path d="M29.4 18.3L28.6 16.7" stroke="#c9c9c9" stroke-width="1"/><path d="M35.8 16.2L35.1 12.8" stroke="#c9c9c9" stroke-width="1"/><text x="34.0" y="10.1" font-size="7.5" fill="#c9c9c9" text-anchor="middle" font-family="Liberation Sans,sans-serif">8</text><path d="M42.6 15.5L42.6 13.7" stroke="#c9c9c9" stroke-width="1"/><path d="M49.4 16.2L50.1 12.8" stroke="#c9c9c9" stroke-width="1"/><text x="51.2" y="10.1" font-size="7.5" fill="#c9c9c9" text-anchor="middle" font-family="Liberation Sans,sans-serif">12</text><path d="M55.8 18.3L56.6 16.7" stroke="#c9c9c9" stroke-width="1"/><path d="M61.7 21.7L63.8 18.9" stroke="#c9c9c9" stroke-width="1"/><text x="67.0" y="17.1" font-size="7.5" fill="#c9c9c9" text-anchor="middle" font-family="Liberation Sans,sans-serif">16</text><path d="M66.8 26.3L68.1 25.0" stroke="#c9c9c9" stroke-width="1"/><path d="M70.7 31.8L73.8 30.0" stroke="#c9c9c9" stroke-width="1"/><text x="78.5" y="30.0" font-size="7.5" fill="#c9c9c9" text-anchor="middle" font-family="Liberation Sans,sans-serif">20</text><path d="M12 30L45.6 46.2 43.2 50.6z" fill="#b9b9b9" stroke="#adadad" stroke-width=".8" stroke-linejoin="round"/><circle cx="43.6" cy="48" r="1.6" fill="#a2a2a2"/></svg></div></div>
<svg style="left:415.6px;top:422px" width="80" height="226" viewBox="0 0 80 226"><rect x="37.200" y="10" width="6.200" height="208" fill="#f4f4f4" stroke="#d9d9d9" stroke-width=".8"/><path d="M33.500 10.0h5M42 10.0h5" stroke="#111" stroke-width="1"/><text x="31.500" y="12.8" font-size="7.700" fill="#111" text-anchor="end" font-family="Liberation Sans,sans-serif">200</text><text x="49" y="12.8" font-size="7.700" fill="#111" text-anchor="start" font-family="Liberation Sans,sans-serif">200</text><path d="M33.500 44.3h5M42 44.3h5" stroke="#111" stroke-width="1"/><text x="31.500" y="47.1" font-size="7.700" fill="#111" text-anchor="end" font-family="Liberation Sans,sans-serif">150</text><text x="49" y="47.1" font-size="7.700" fill="#111" text-anchor="start" font-family="Liberation Sans,sans-serif">150</text><path d="M33.500 78.7h5M42 78.7h5" stroke="#111" stroke-width="1"/><text x="31.500" y="81.5" font-size="7.700" fill="#111" text-anchor="end" font-family="Liberation Sans,sans-serif">100</text><text x="49" y="81.5" font-size="7.700" fill="#111" text-anchor="start" font-family="Liberation Sans,sans-serif">100</text><path d="M33.500 113.0h5M42 113.0h5" stroke="#111" stroke-width="1"/><text x="31.500" y="115.8" font-size="7.700" fill="#111" text-anchor="end" font-family="Liberation Sans,sans-serif">50</text><text x="49" y="115.8" font-size="7.700" fill="#111" text-anchor="start" font-family="Liberation Sans,sans-serif">50</text><path d="M33.500 147.3h5M42 147.3h5" stroke="#111" stroke-width="1"/><text x="31.500" y="150.1" font-size="7.700" fill="#111" text-anchor="end" font-family="Liberation Sans,sans-serif">0</text><text x="49" y="150.1" font-size="7.700" fill="#111" text-anchor="start" font-family="Liberation Sans,sans-serif">0</text><path d="M33.500 181.7h5M42 181.7h5" stroke="#111" stroke-width="1"/><text x="31.500" y="184.5" font-size="7.700" fill="#111" text-anchor="end" font-family="Liberation Sans,sans-serif">-50</text><text x="49" y="184.5" font-size="7.700" fill="#111" text-anchor="start" font-family="Liberation Sans,sans-serif">-50</text><path d="M33.500 216.0h5M42 216.0h5" stroke="#111" stroke-width="1"/><text x="31.500" y="218.8" font-size="7.700" fill="#111" text-anchor="end" font-family="Liberation Sans,sans-serif">-100</text><text x="49" y="218.8" font-size="7.700" fill="#111" text-anchor="start" font-family="Liberation Sans,sans-serif">-100</text><path d="M37.500 16.9h1.200M42 16.9h1.200M37.500 23.7h1.200M42 23.7h1.200M37.500 30.6h1.200M42 30.6h1.200M37.500 37.5h1.200M42 37.5h1.200M37.500 51.2h1.200M42 51.2h1.200M37.500 58.1h1.200M42 58.1h1.200M37.500 64.9h1.200M42 64.9h1.200M37.500 71.8h1.200M42 71.8h1.200M37.500 85.5h1.200M42 85.5h1.200M37.500 92.4h1.200M42 92.4h1.200M37.500 99.3h1.200M42 99.3h1.200M37.500 106.1h1.200M42 106.1h1.200M37.500 119.9h1.200M42 119.9h1.200M37.500 126.7h1.200M42 126.7h1.200M37.500 133.6h1.200M42 133.6h1.200M37.500 140.5h1.200M42 140.5h1.200M37.500 154.2h1.200M42 154.2h1.200M37.500 161.1h1.200M42 161.1h1.200M37.500 167.9h1.200M42 167.9h1.200M37.500 174.8h1.200M42 174.8h1.200M37.500 188.5h1.200M42 188.5h1.200M37.500 195.4h1.200M42 195.4h1.200M37.500 202.3h1.200M42 202.3h1.200M37.500 209.1h1.200M42 209.1h1.200" stroke="#111" stroke-width="1"/><rect x="39" y="206.7" width="3" height="10.3" fill="#1414ff"/><rect x="37" y="206.7" width="7" height="1.600" fill="#1414ff"/></svg>
<div class="a" style="left:415.6px;top:642.5px;width:80px;text-align:center;font-size:11.500px;line-height:14px;color:#111">温度(℃)<br>-87.97</div>
<svg style="left:561.5px;top:422px" width="80" height="226" viewBox="0 0 80 226"><rect x="37.200" y="10" width="6.200" height="208" fill="#f4f4f4" stroke="#cfcfcf" stroke-width=".8"/><path d="M33.500 10.0h5M42 10.0h5" stroke="#c6c6c6" stroke-width="1"/><text x="31.500" y="12.8" font-size="7.700" fill="#c6c6c6" text-anchor="end" font-family="Liberation Sans,sans-serif">200</text><text x="49" y="12.8" font-size="7.700" fill="#c6c6c6" text-anchor="start" font-family="Liberation Sans,sans-serif">200</text><path d="M33.500 44.3h5M42 44.3h5" stroke="#c6c6c6" stroke-width="1"/><text x="31.500" y="47.1" font-size="7.700" fill="#c6c6c6" text-anchor="end" font-family="Liberation Sans,sans-serif">150</text><text x="49" y="47.1" font-size="7.700" fill="#c6c6c6" text-anchor="start" font-family="Liberation Sans,sans-serif">150</text><path d="M33.500 78.7h5M42 78.7h5" stroke="#c6c6c6" stroke-width="1"/><text x="31.500" y="81.5" font-size="7.700" fill="#c6c6c6" text-anchor="end" font-family="Liberation Sans,sans-serif">100</text><text x="49" y="81.5" font-size="7.700" fill="#c6c6c6" text-anchor="start" font-family="Liberation Sans,sans-serif">100</text><path d="M33.500 113.0h5M42 113.0h5" stroke="#c6c6c6" stroke-width="1"/><text x="31.500" y="115.8" font-size="7.700" fill="#c6c6c6" text-anchor="end" font-family="Liberation Sans,sans-serif">50</text><text x="49" y="115.8" font-size="7.700" fill="#c6c6c6" text-anchor="start" font-family="Liberation Sans,sans-serif">50</text><path d="M33.500 147.3h5M42 147.3h5" stroke="#c6c6c6" stroke-width="1"/><text x="31.500" y="150.1" font-size="7.700" fill="#c6c6c6" text-anchor="end" font-family="Liberation Sans,sans-serif">0</text><text x="49" y="150.1" font-size="7.700" fill="#c6c6c6" text-anchor="start" font-family="Liberation Sans,sans-serif">0</text><path d="M33.500 181.7h5M42 181.7h5" stroke="#c6c6c6" stroke-width="1"/><text x="31.500" y="184.5" font-size="7.700" fill="#c6c6c6" text-anchor="end" font-family="Liberation Sans,sans-serif">-50</text><text x="49" y="184.5" font-size="7.700" fill="#c6c6c6" text-anchor="start" font-family="Liberation Sans,sans-serif">-50</text><path d="M33.500 216.0h5M42 216.0h5" stroke="#c6c6c6" stroke-width="1"/><text x="31.500" y="218.8" font-size="7.700" fill="#c6c6c6" text-anchor="end" font-family="Liberation Sans,sans-serif">-100</text><text x="49" y="218.8" font-size="7.700" fill="#c6c6c6" text-anchor="start" font-family="Liberation Sans,sans-serif">-100</text><path d="M37.500 16.9h1.200M42 16.9h1.200M37.500 23.7h1.200M42 23.7h1.200M37.500 30.6h1.200M42 30.6h1.200M37.500 37.5h1.200M42 37.5h1.200M37.500 51.2h1.200M42 51.2h1.200M37.500 58.1h1.200M42 58.1h1.200M37.500 64.9h1.200M42 64.9h1.200M37.500 71.8h1.200M42 71.8h1.200M37.500 85.5h1.200M42 85.5h1.200M37.500 92.4h1.200M42 92.4h1.200M37.500 99.3h1.200M42 99.3h1.200M37.500 106.1h1.200M42 106.1h1.200M37.500 119.9h1.200M42 119.9h1.200M37.500 126.7h1.200M42 126.7h1.200M37.500 133.6h1.200M42 133.6h1.200M37.500 140.5h1.200M42 140.5h1.200M37.500 154.2h1.200M42 154.2h1.200M37.500 161.1h1.200M42 161.1h1.200M37.500 167.9h1.200M42 167.9h1.200M37.500 174.8h1.200M42 174.8h1.200M37.500 188.5h1.200M42 188.5h1.200M37.500 195.4h1.200M42 195.4h1.200M37.500 202.3h1.200M42 202.3h1.200M37.500 209.1h1.200M42 209.1h1.200" stroke="#c6c6c6" stroke-width="1"/></svg>
<div class="a pnl" style="left:717px;top:85.5px;width:371px;height:656px"></div>
<div class="a" style="left:718px;top:86.5px;width:369px;height:15.500px;background:linear-gradient(#e6e9ed,#dcdfe4);border-bottom:1px solid #cfd2d7"></div>
<div class="a" style="left:728px;top:86px;font-size:10.500px;line-height:17px;color:#2b2b3b">LOG</div>
<div class="a" style="left:721px;top:106px;width:361px;height:499.500px;background:#fff"></div>
<div class="a" style="left:1065px;top:106px;width:17px;height:499.500px;background:#f3f4f6"></div>
<div class="a" style="left:1068px;top:112px;border:5px solid transparent;border-top:0;border-bottom:5px solid #505050"></div>
<div class="a" style="left:1068px;top:595px;border:5px solid transparent;border-bottom:0;border-top:5px solid #505050"></div>
<div class="a" style="left:1066px;top:541.5px;width:15px;height:48px;border:1px solid #b9bcc2;border-radius:2px;background:linear-gradient(90deg,#fbfbfc,#e9ebee)"></div>
<div class="a" style="left:1070px;top:561.5px;width:7px;height:1px;background:#666;box-shadow:0 2px 0 #666,0 4px 0 #666,0 6px 0 #666"></div>
<div class="a lb b" style="left:722.5px;top:106px">11 06 61 EC 55 55 AA 3C</div>
<div class="a ls" style="left:722.5px;top:127px">>[Rx &lt;-][COM6][17:16:44:880]</div>
<div class="a lb g" style="left:722.5px;top:148px">11 06 61 EC 55 55 AA 3C</div>
<div class="a ls" style="left:722.5px;top:169px">>[Rx &lt;-][COM6][17:16:46:263]</div>
<div class="a lb g" style="left:722.5px;top:190px">55 53 52 2D 49 4F 38 31 38 54</div>
<div class="a ls" style="left:722.5px;top:211px">>[Tx ->][COM6][17:19:41:372]</div>
<div class="a lb b" style="left:722.5px;top:232px">11 06 61 EC 55 55 AA 3C</div>
<div class="a ls" style="left:722.5px;top:253px">>[Rx &lt;-][COM6][17:19:41:484]</div>
<div class="a lb g" style="left:722.5px;top:274px">11 06 61 EC 55 55 AA 3C</div>
<div class="a ls" style="left:722.5px;top:295px">>[Rx &lt;-][COM6][17:19:42:948]</div>
<div class="a lb g" style="left:722.5px;top:316px">55 53 52 2D 49 4F 38 31 38 54</div>
<div class="a ls" style="left:722.5px;top:337px">>[Tx ->][COM6][17:22:09:037]</div>
<div class="a lb b" style="left:722.5px;top:358px">11 05 05 04 FF 00 CF A7</div>
<div class="a ls" style="left:722.5px;top:379px">>[Rx &lt;-][COM6][17:22:09:143]</div>
<div class="a lb g" style="left:722.5px;top:400px">11 05 05 04 FF 00 CF A7</div>
<div class="a ls" style="left:722.5px;top:421px">>[Tx ->][COM6][17:22:32:463]</div>
<div class="a lb b" style="left:722.5px;top:442px">11 05 05 04 00 00 8E 57</div>
<div class="a ls" style="left:722.5px;top:463px">>[Rx &lt;-][COM6][17:22:32:552]</div>
<div class="a lb g" style="left:722.5px;top:484px">11 05 05 04 00 00 8E 57</div>
<div class="a ls" style="left:722.5px;top:505px">>[Tx ->][COM6][17:22:36:517]</div>
<div class="a lb b" style="left:722.5px;top:526px">11 05 05 04 FF 00 CF A7</div>
<div class="a ls" style="left:722.5px;top:547px">>[Rx &lt;-][COM6][17:22:36:608]</div>
<div class="a lb g" style="left:722.5px;top:568px">11 05 05 04 FF 00 CF A7</div>
<div class="a" style="left:893.5px;top:611.5px;width:1.500px;height:1.500px;background:#8a8d92;box-shadow:3.700px 0 0 #8a8d92,7.400px 0 0 #8a8d92,11.100px 0 0 #8a8d92"></div>
<div class="a" style="left:721px;top:617px;width:361px;height:90.500px;background:#fff"></div>
<div class="a btn" style="left:731px;top:712px;width:76.5px;height:25px;line-height:23px;">发送</div>
<div class="a btn" style="left:816px;top:712px;width:76.5px;height:25px;line-height:23px;">校验并发送</div>
<div class="a btn" style="left:893.5px;top:712px;width:21px;height:25px;line-height:23px;"></div>
<div class="a btn" style="left:986px;top:712px;width:76.5px;height:25px;line-height:23px;">清空</div>
<svg style="left:896px;top:716px" width="16" height="16" viewBox="0 0 16 16"><circle cx="8" cy="8" r="7.500" fill="#3f7ac2" stroke="#2b5e9f" stroke-width=".8"/><rect x="7" y="6.800" width="2.200" height="5.400" fill="#fff"/><circle cx="8.100" cy="4.400" r="1.300" fill="#fff"/></svg>
</div>
<!--/WIN-->
<!--ANNOT-->
<div class="a" style="left:549px;top:199px;width:126px;height:169px;border:7px solid #f63539"></div>
<div class="a" style="left:378px;top:826px;width:1118px;height:59px;border:7px solid #f63539"></div>
<svg style="left:0;top:0" width="1865" height="994" viewBox="0 0 1865 994"><polygon fill="#f63539" points="637.8,380.500 638.4,380.500 704.6,640 745,793 750.200,791.500 744.600,815.200 729.200,796.400 735.400,794.900 698.100,640"/></svg>
<!--/ANNOT-->
</body>
</html>
